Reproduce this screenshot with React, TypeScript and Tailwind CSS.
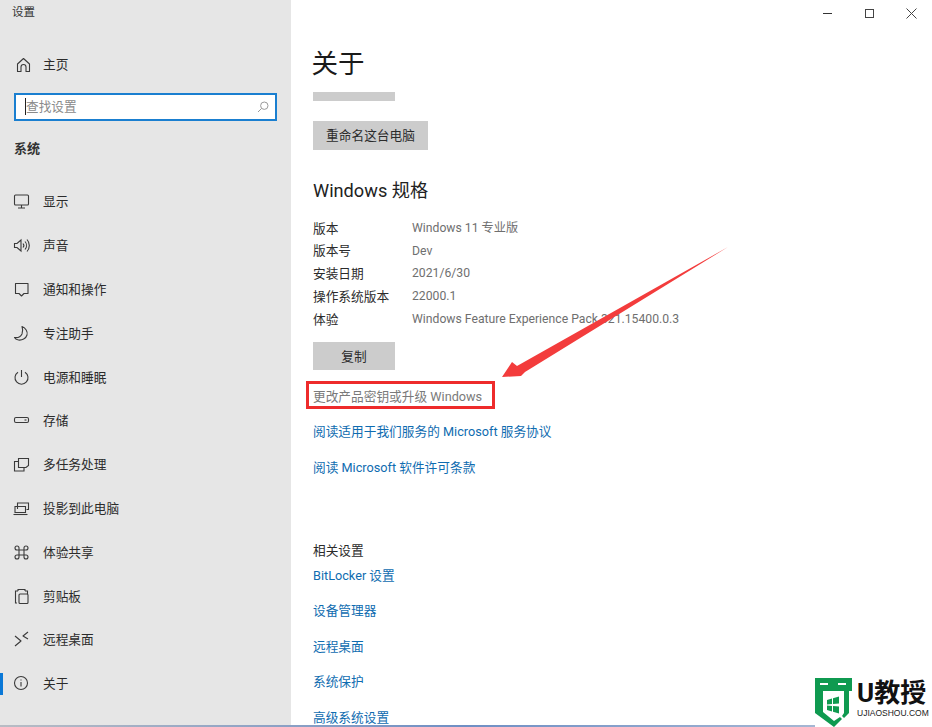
const NAV_ITEMS = [
  { label: "显示", icon: <><rect x="1.5" y="2" width="14" height="10" rx="1" /><path d="M5 15h7M8.5 12v3" /></> },
  { label: "声音", icon: <><path d="M1.5 6.5h2.5L8 3v11l-4-3.500H1.500z" /><path d="M10 6.500a3 3 0 0 1 0 4M12 4.500a6 6 0 0 1 0 8M14 2.500a9 9 0 0 1 0 12" /></> },
  { label: "通知和操作", icon: <path d="M2.500 2.500h12.500v10h-4l-2.500 2.500-2.500-2.500h-3.500z" strokeLinejoin="round" /> },
  { label: "专注助手", icon: <path d="M9 1.500c3.500 1.500 6 5 5 8.500-1 3.500-5 5.500-8.500 5-2-.300-3.500-1.300-4-2.500 3 .500 6-.500 7.500-3.500 1-2.500.800-5.300 0-7.500z" strokeLinejoin="round" /> },
  { label: "电源和睡眠", icon: <><path d="M8.500 1v7" /><path d="M5 3.200a6.500 6.500 0 1 0 7 0" /></> },
  { label: "存储", icon: <><rect x="1.500" y="5.500" width="14" height="5" rx="1.500" /><path d="M11.500 8h2" /></> },
  { label: "多任务处理", icon: <><path d="M5.500 11.500V2.500h10v7l-2.500 2z" /><path d="M5.500 5.500h-4v9.500h9.500v-3.500" /></> },
  { label: "投影到此电脑", icon: <><path d="M4.500 9V3h11v6.500h-2" /><path d="M2 6.500h10.500v6H2z" /><path d="M.5 14.500h14" /></> },
  { label: "体验共享", icon: <path d="M6 6h5v5H6zM6 6H4a2 2 0 1 1 2-2zM11 6V4a2 2 0 1 1 2 2zM11 11h2a2 2 0 1 1-2 2zM6 11v2a2 2 0 1 1-2-2z" /> },
  { label: "剪贴板", icon: <><path d="M4 15H2.500V3H5M12 3h2.500v3" /><path d="M5 3V1.500h7V3" /><rect x="6" y="6" width="9" height="9.500" rx="1" /></> },
  { label: "远程桌面", icon: <path d="M2 5l6 5-6 5M15 1l-5 4 5 3" strokeLinejoin="round" /> },
  { label: "关于", icon: <><circle cx="8" cy="8" r="6.500" /><path d="M8 7v4.500M8 4.500v1" /></>, active: true },
];

const RELATED = ["BitLocker 设置", "设备管理器", "远程桌面", "系统保护", "高级系统设置"];

const SPECS = [
  ["版本", "Windows 11 专业版"],
  ["版本号", "Dev"],
  ["安装日期", "2021/6/30"],
  ["操作系统版本", "22000.1"],
  ["体验", "Windows Feature Experience Pack 321.15400.0.3"],
];

function NavIcon({ children }: { children: React.ReactNode }) {
  return (
    <svg width="17" height="17" viewBox="0 0 17 17" fill="none" stroke="#3a3a3a" strokeWidth="1.100" className="shrink-0">
      {children}
    </svg>
  );
}

export default function App() {
  return (
    <div className="relative flex h-[727px] w-[932px] overflow-hidden bg-white font-['Roboto','Noto_Sans_CJK_SC',sans-serif] text-[12.7px] text-[#2b2b2b]">
      {/* Sidebar */}
      <aside className="flex w-[291px] shrink-0 flex-col bg-[#e6e6e6]">
        <div className="flex h-[26px] items-center pl-[12px] text-[11.500px] text-[#333]">设置</div>

        <div className="mt-[17px] flex h-[44px] items-center pl-[15px]">
          <NavIcon>
            <path d="M4.500 14.500H2.500V7L8.500 1.500 14.500 7v7.500H11V10a2.500 2.500 0 0 0-5 0v4.500z" strokeLinejoin="round" />
          </NavIcon>
          <span className="ml-[11px]">主页</span>
        </div>

        <div className="mx-[14px] mt-[6px] flex h-[28px] items-center justify-between border-2 border-[#1a7fd0] bg-white pl-[9px] pr-[6px]">
          <div className="flex items-center text-[#8a8a8a]">
            <span className="h-[17px] w-px bg-[#222]" />
            <span>查找设置</span>
          </div>
          <svg width="12" height="12" viewBox="0 0 12 12" fill="none" stroke="#9a9a9a" strokeWidth="1">
            <circle cx="7.300" cy="4.700" r="3.700" />
            <path d="M4.500 7.500L1 11" />
          </svg>
        </div>

        <div className="mt-[16px] flex h-[24px] items-center pl-[14px] text-[13px] font-bold text-[#333]">系统</div>

        <nav className="mt-[19px] flex flex-col">
          {NAV_ITEMS.map((item) => (
            <div key={item.label} className="relative flex h-[43.800px] items-center pl-[13px]">
              {item.active && <span className="absolute left-0 top-[11px] h-[22px] w-[3px] bg-[#0a78d7]" />}
              <NavIcon>{item.icon}</NavIcon>
              <span className="ml-[13px]">{item.label}</span>
            </div>
          ))}
        </nav>
      </aside>

      {/* Main */}
      <main className="flex min-w-0 flex-1 flex-col">
        <div className="flex h-[26px] shrink-0 justify-end">
          <div className="flex w-[42px] items-center justify-center">
            <span className="h-px w-[9px] bg-[#333]" />
          </div>
          <div className="flex w-[42px] items-center justify-center">
            <span className="h-[9px] w-[9px] border border-[#444]" />
          </div>
          <div className="flex w-[42px] items-center justify-center">
            <svg width="11" height="11" viewBox="0 0 11 11" stroke="#444" strokeWidth="1">
              <path d="M.5.500l10 10M10.500.500l-10 10" />
            </svg>
          </div>
        </div>

        <div className="flex shrink-0 flex-col pl-[22px]">
          <h1 className="ml-[-1.500px] mt-[18px] flex h-[40px] shrink-0 items-center text-[26.500px] text-[#1a1a1a]">关于</h1>
          <div className="mt-[8px] h-[8.500px] w-[82px] shrink-0 bg-[#cccccc]" />
          <button className="mt-[20.500px] flex h-[29px] w-[115px] shrink-0 items-center justify-center bg-[#cccccc]">重命名这台电脑</button>

          <h2 className="mt-[26px] flex h-[30px] shrink-0 items-center text-[18.200px] text-[#222]">Windows 规格</h2>

          <div className="mt-[10.650px] flex shrink-0 flex-col">
            {SPECS.map(([name, value]) => (
              <div key={name} className="flex h-[22.800px] shrink-0 items-center">
                <span className="w-[99px] shrink-0">{name}</span>
                <span className="text-[12.200px] text-[#6f6f6f]">{value}</span>
              </div>
            ))}
          </div>

          <button className="mt-[11.500px] flex h-[28px] w-[82px] shrink-0 items-center justify-center bg-[#cccccc]">复制</button>

          {/* Annotated link */}
          <div className="relative mt-[14px] flex h-[24px] shrink-0 items-center text-[#7a7a7a]">
            更改产品密钥或升级 Windows
            <span className="absolute left-[-7px] top-[-3px] h-[28px] w-[189px] border-[3px] border-[#ee2b2b]" />
          </div>

          <a className="mt-[11px] flex h-[24px] shrink-0 items-center text-[#0f6cb0]">阅读适用于我们服务的 Microsoft 服务协议</a>
          <a className="mt-[12px] flex h-[24px] shrink-0 items-center text-[#0f6cb0]">阅读 Microsoft 软件许可条款</a>

          <div className="mt-[59px] flex h-[24px] shrink-0 items-center">相关设置</div>
          <div className="mt-px flex shrink-0 flex-col gap-[11.600px]">
            {RELATED.map((label) => (
              <a key={label} className="flex h-[24px] shrink-0 items-center text-[#0f6cb0]">{label}</a>
            ))}
          </div>
        </div>
      </main>

      {/* Red arrow annotation */}
      <svg width="932" height="727" viewBox="0 0 932 727" className="pointer-events-none absolute left-0 top-0">
        <polygon points="502,377 512,362 517,366 728,247 525,372 521,376" fill="#f33c3c" />
      </svg>

      {/* Bottom window edge */}
      <div className="absolute bottom-0 left-0 h-[2px] w-full bg-gradient-to-r from-[#b8bcc4] via-[#6f8fc4] to-[#b8c4d8]" />

      {/* Watermark logo */}
      <div className="absolute left-[815px] top-[678px] flex bg-white">
        <svg width="37" height="49" viewBox="0 0 37 49">
          <path d="M0 0h37v13h-3v22l-5 5-2-2 2-3V13H8v21l11 9 6-4 2 2-8 8L0 35z" fill="#0f9a50" />
          <path d="M5 5h8v2H5zM23 5h8v2h-8z" fill="#fff" />
          <path d="M12 22l5-1.500v5.500l-5 .500zM18 20.300l6-1.800v7l-6 .500zM12 27.500l5 .500v5.500l-5-1.500zM18 28l6 .500v7l-6-1.800z" fill="#0f9a50" />
        </svg>
        <div className="ml-[5px] flex w-[75px] flex-col">
          <span className="mt-[1px] text-[26px] leading-[29px] font-bold text-[#111]">U教授</span>
          <span className="whitespace-nowrap text-[8.500px] leading-[11px] text-[#222] font-['Liberation_Sans',sans-serif]">UJIAOSHOU.COM</span>
        </div>
      </div>
    </div>
  );
}
